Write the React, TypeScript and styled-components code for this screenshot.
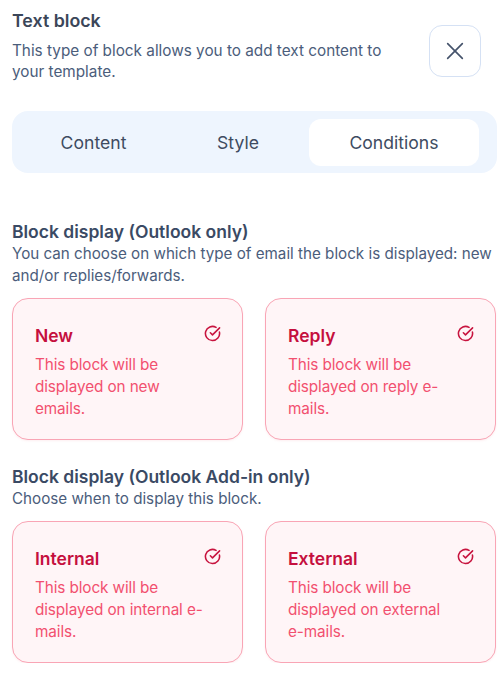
import React from "react";
import styled, { createGlobalStyle } from "styled-components";

const Global = createGlobalStyle`
  html, body { margin: 0; padding: 0; background: #ffffff; }
  body { font-family: Inter, "Noto Sans", sans-serif; -webkit-font-smoothing: antialiased; }
  * { box-sizing: border-box; }
`;

const Page = styled.div`
  width: 504px;
  padding: 9px 7px 0 12px;
  display: flex;
  flex-direction: column;
`;

const Header = styled.div`
  display: flex;
  justify-content: space-between;
  align-items: flex-start;
`;

const HeaderText = styled.div`
  display: flex;
  flex-direction: column;
  gap: 7px;
  width: 392px;
`;

const Title = styled.h1`
  margin: 0;
  font-size: 17.8px;
  line-height: 24px;
  font-weight: 600;
  color: #3b4659;
`;

const Desc = styled.p`
  margin: 0;
  font-size: 15.3px;
  line-height: 21px;
  color: #4b5d7b;
`;

const CloseButton = styled.button`
  width: 52px;
  height: 52px;
  margin: 16px 16px 0 0;
  border: 1px solid #d5e1f4;
  border-radius: 13px;
  background: #ffffff;
  display: flex;
  align-items: center;
  justify-content: center;
  padding: 0;
  color: #45536b;
`;

const Tabs = styled.div`
  margin-top: 29px;
  height: 62px;
  background: #eef5fe;
  border-radius: 16px;
  padding: 8px 19px 7px 8px;
  display: grid;
  grid-template-columns: 147px 120px 170px;
  column-gap: 11px;
`;

const Tab = styled.div<{ $active?: boolean }>`
  display: flex;
  align-items: center;
  justify-content: center;
  border-radius: 12px;
  background: ${(p) => (p.$active ? "#ffffff" : "transparent")};
  font-size: 17.6px;
  color: #3e4b61;
`;

const Section = styled.section<{ $top: number }>`
  margin-top: ${(p) => p.$top}px;
  display: flex;
  flex-direction: column;
`;

const SectionTitle = styled.h2`
  margin: 0;
  font-size: 17.5px;
  line-height: 22px;
  font-weight: 600;
  color: #3a4a64;
`;

const SectionDesc = styled.p`
  margin: 0;
  font-size: 15.2px;
  line-height: 22px;
  color: #4b5d7b;
`;

const CardRow = styled.div`
  margin-top: 11px;
  display: grid;
  grid-template-columns: 231px 231px;
  column-gap: 22px;
`;

const Card = styled.div`
  height: 142px;
  border: 1px solid #f9a5b5;
  border-radius: 16px;
  background: #fff5f7;
  padding: 25px 21px 0 22px;
  display: flex;
  justify-content: space-between;
  align-items: flex-start;
  box-shadow: 0 1px 2px rgba(240, 120, 140, 0.12);
`;

const CardText = styled.div`
  width: 169px;
  display: flex;
  flex-direction: column;
  gap: 6px;
`;

const CardTitle = styled.div`
  font-size: 17.5px;
  line-height: 24px;
  font-weight: 600;
  color: #c50f3e;
`;

const CardDesc = styled.div`
  font-size: 15.3px;
  line-height: 22px;
  letter-spacing: -0.1px;
  color: #f2506f;
`;

const Check = styled.span`
  margin-top: 1px;
  color: #c8143f;
  display: flex;
  flex-shrink: 0;
`;

const CheckIcon = () => (
  <svg width="17" height="17" viewBox="0 0 24 24" fill="none" stroke="currentColor" strokeWidth="2.2" strokeLinecap="round" strokeLinejoin="round">
    <path d="M21.801 10A10 10 0 1 1 17 3.335" />
    <path d="m9 11 3 3L22 4" />
  </svg>
);

const XIcon = () => (
  <svg width="22" height="22" viewBox="0 0 24 24" fill="none" stroke="currentColor" strokeWidth="1.8" strokeLinecap="round">
    <path d="M4 4 20 20" />
    <path d="M20 4 4 20" />
  </svg>
);

type Opt = { title: string; desc: string };

const OptionCard = ({ title, desc }: Opt) => (
  <Card>
    <CardText>
      <CardTitle>{title}</CardTitle>
      <CardDesc>{desc}</CardDesc>
    </CardText>
    <Check>
      <CheckIcon />
    </Check>
  </Card>
);

export default function App() {
  return (
    <>
      <Global />
      <Page>
        <Header>
          <HeaderText>
            <Title>Text block</Title>
            <Desc>This type of block allows you to add text content to your template.</Desc>
          </HeaderText>
          <CloseButton aria-label="Close">
            <XIcon />
          </CloseButton>
        </Header>
        <Tabs>
          <Tab>Content</Tab>
          <Tab>Style</Tab>
          <Tab $active>Conditions</Tab>
        </Tabs>
        <Section $top={48}>
          <SectionTitle>Block display (Outlook only)</SectionTitle>
          <SectionDesc>You can choose on which type of email the block is displayed: new and/or replies/forwards.</SectionDesc>
          <CardRow>
            <OptionCard title="New" desc="This block will be displayed on new emails." />
            <OptionCard title="Reply" desc="This block will be displayed on reply e-mails." />
          </CardRow>
        </Section>
        <Section $top={26}>
          <SectionTitle>Block display (Outlook Add-in only)</SectionTitle>
          <SectionDesc>Choose when to display this block.</SectionDesc>
          <CardRow>
            <OptionCard title="Internal" desc="This block will be displayed on internal e-mails." />
            <OptionCard title="External" desc="This block will be displayed on external e-mails." />
          </CardRow>
        </Section>
      </Page>
    </>
  );
}
